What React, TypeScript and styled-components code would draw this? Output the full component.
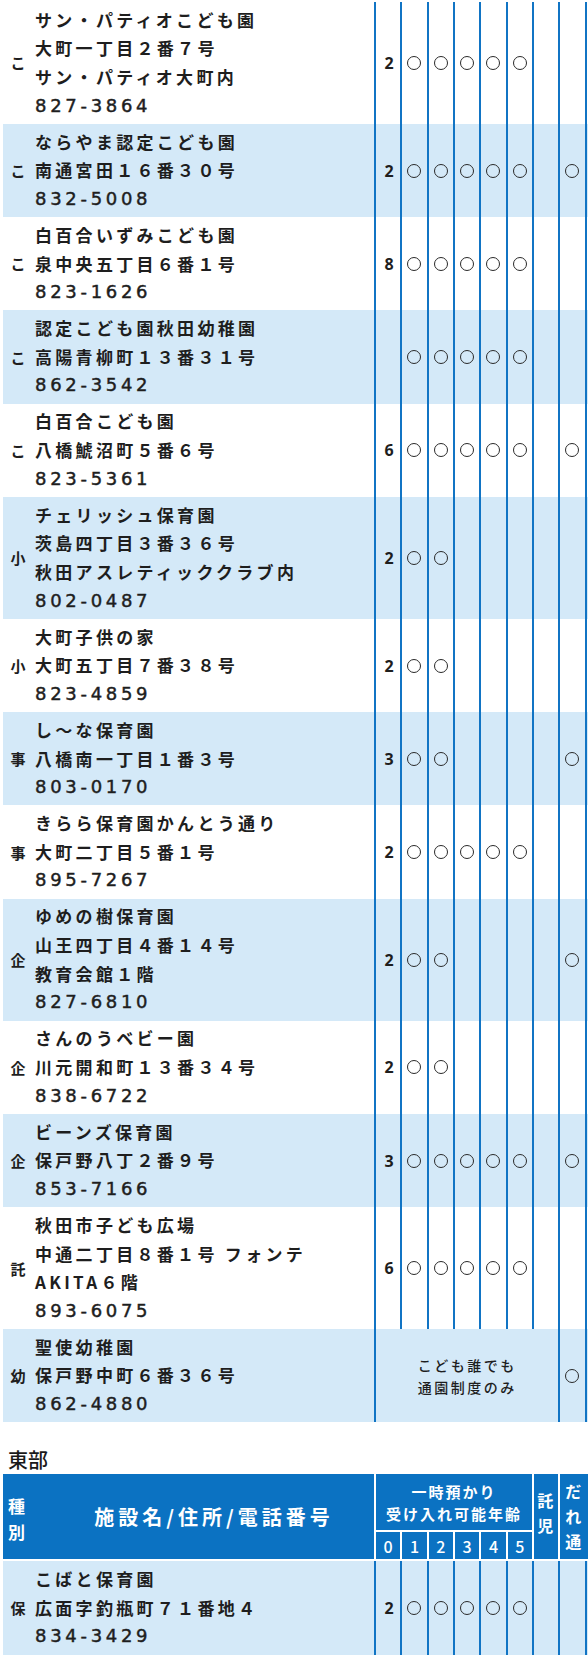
import React from 'react';
import styled, {createGlobalStyle} from "styled-components";

const COLS = '31px 340px repeat(8, 26.33px) 1fr';
const LINE = '#1174c4';
const SHADE = '#d4e9f8';
const HEAD = '#0b72c2';

type Facility = {
    type: string;
    lines: string[];
    phone: string;
    first?: string;
    ages?: number;
    takuji?: boolean;
    dare?: boolean;
    merged?: string[];
};

const west: Facility[] = [
    {type: 'こ', lines: ['サン・パティオこども園', '大町一丁目２番７号', 'サン・パティオ大町内'], phone: '827-3864', first: '2', ages: 5},
    {type: 'こ', lines: ['ならやま認定こども園', '南通宮田１６番３０号'], phone: '832-5008', first: '2', ages: 5, dare: true},
    {type: 'こ', lines: ['白百合いずみこども園', '泉中央五丁目６番１号'], phone: '823-1626', first: '8', ages: 5},
    {type: 'こ', lines: ['認定こども園秋田幼稚園', '高陽青柳町１３番３１号'], phone: '862-3542', first: '', ages: 5},
    {type: 'こ', lines: ['白百合こども園', '八橋鯱沼町５番６号'], phone: '823-5361', first: '6', ages: 5, dare: true},
    {type: '小', lines: ['チェリッシュ保育園', '茨島四丁目３番３６号', '秋田アスレティッククラブ内'], phone: '802-0487', first: '2', ages: 2},
    {type: '小', lines: ['大町子供の家', '大町五丁目７番３８号'], phone: '823-4859', first: '2', ages: 2},
    {type: '事', lines: ['し～な保育園', '八橋南一丁目１番３号'], phone: '803-0170', first: '3', ages: 2, dare: true},
    {type: '事', lines: ['きらら保育園かんとう通り', '大町二丁目５番１号'], phone: '895-7267', first: '2', ages: 5},
    {type: '企', lines: ['ゆめの樹保育園', '山王四丁目４番１４号', '教育会館１階'], phone: '827-6810', first: '2', ages: 2, dare: true},
    {type: '企', lines: ['さんのうベビー園', '川元開和町１３番３４号'], phone: '838-6722', first: '2', ages: 2},
    {type: '企', lines: ['ビーンズ保育園', '保戸野八丁２番９号'], phone: '853-7166', first: '3', ages: 5, dare: true},
    {type: '託', lines: ['秋田市子ども広場', '中通二丁目８番１号 フォンテ', 'AKITA６階'], phone: '893-6075', first: '6', ages: 5},
    {type: '幼', lines: ['聖使幼稚園', '保戸野中町６番３６号'], phone: '862-4880', merged: ['こども誰でも', '通園制度のみ'], dare: true},
];

const east: Facility[] = [
    {type: '保', lines: ['こばと保育園', '広面字釣瓶町７１番地４'], phone: '834-3429', first: '2', ages: 5},
];

const FacilityRow = ({item, shade}: { item: Facility; shade: boolean }) => (
    <Row $shade={shade}>
        <TypeCell>{item.type}</TypeCell>
        <NameCell>
            {item.lines.map((l, i) => <Line key={i}>{l}</Line>)}
            <Line $phone>{item.phone}</Line>
        </NameCell>
        {item.merged ? (
            <MergedCell>{item.merged.map((m, i) => <div key={i}>{m}</div>)}</MergedCell>
        ) : (
            <>
                <MarkCell><Num>{item.first}</Num></MarkCell>
                {[1, 2, 3, 4, 5].map(n => (
                    <MarkCell key={n}>{(item.ages ?? 0) >= n && <Circle/>}</MarkCell>
                ))}
                <MarkCell>{item.takuji && <Circle/>}</MarkCell>
            </>
        )}
        <MarkCell>{item.dare && <Circle/>}</MarkCell>
        <MarkCell/>
    </Row>
);

export default function App() {
    return (
        <>
            <GlobalStyle/>
            <Page>
                <Table>
                    {west.map((item, i) => <FacilityRow key={i} item={item} shade={i % 2 === 1}/>)}
                </Table>
                <AreaTitle>東部</AreaTitle>
                <Table>
                    <Head>
                        <HeadType>種<br/>別</HeadType>
                        <HeadName>施設名/住所/電話番号</HeadName>
                        <HeadGroup>一時預かり<br/>受け入れ可能年齢</HeadGroup>
                        {[0, 1, 2, 3, 4, 5].map(a => <HeadAge key={a} $col={3 + a}>{a}</HeadAge>)}
                        <HeadVertical $col="9 / span 1">託<br/>児</HeadVertical>
                        <HeadVertical $col="10 / span 2" $top={3}>だ<br/>れ<br/>通</HeadVertical>
                    </Head>
                    {east.map((item, i) => <FacilityRow key={i} item={item} shade={true}/>)}
                </Table>
            </Page>
        </>
    );
}

const GlobalStyle = createGlobalStyle`
  html, body {
    margin: 0;
    padding: 0;
    overflow: hidden;
    background: #fff;
  }
  body {
    font-family: "Noto Sans CJK JP", "Noto Sans", sans-serif;
    color: #1e1e1e;
  }
`

const Page = styled.div`
  padding: 2px 0 0 3px;
  width: 585px;
`

const Table = styled.div`
  display: flex;
  flex-direction: column;
`

const Row = styled.div<{ $shade: boolean }>`
  display: grid;
  grid-template-columns: ${COLS};
  background-color: ${p => p.$shade ? SHADE : '#fff'};
`

const TypeCell = styled.div`
  display: flex;
  align-items: center;
  justify-content: center;
  font-size: 15px;
  font-weight: 700;
  padding-right: 1px;
`

const NameCell = styled.div`
  padding: 3.75px 0 3.75px 1px;
  font-size: 17px;
  font-weight: 700;
`

const Line = styled.div<{ $phone?: boolean }>`
  height: 28.6px;
  line-height: 28.6px;
  white-space: nowrap;
  font-family: ${p => p.$phone ? '"DejaVu Sans", sans-serif' : 'inherit'};
  font-size: ${p => p.$phone ? '18px' : 'inherit'};
  font-weight: ${p => p.$phone ? 400 : 700};
  -webkit-text-stroke: ${p => p.$phone ? '0.45px #1e1e1e' : '0'};
  letter-spacing: ${p => p.$phone ? '3.7px' : '3.3px'};
`

const MarkCell = styled.div`
  border-left: 2px solid ${LINE};
  display: flex;
  align-items: center;
  justify-content: center;
`

const MergedCell = styled.div`
  grid-column: span 7;
  border-left: 2px solid ${LINE};
  display: flex;
  flex-direction: column;
  align-items: center;
  justify-content: center;
  font-size: 14px;
  font-weight: 500;
  line-height: 22px;
  letter-spacing: 2.5px;
`

const Num = styled.span`
  font-family: "Noto Sans", sans-serif;
  font-weight: 700;
  font-size: 16px;
  margin-left: 2px;
`

const Circle = styled.span`
  width: 14px;
  height: 14px;
  box-sizing: border-box;
  border: 1.4px solid #2a2a2a;
  border-radius: 50%;
`

const AreaTitle = styled.h3`
  margin: 24px 0 0 5px;
  height: 28px;
  line-height: 28px;
  font-size: 20px;
  font-weight: 500;
  color: #1a1a1a;
`

const Head = styled.div`
  display: grid;
  grid-template-columns: ${COLS};
  grid-template-rows: 58px 27px;
  background-color: ${HEAD};
  color: #fff;
  margin-bottom: 2px;
`

const HeadType = styled.div`
  grid-column: 1;
  grid-row: 1 / span 2;
  display: flex;
  align-items: center;
  padding: 4px 0 0 5px;
  font-size: 17px;
  font-weight: 700;
  line-height: 26px;
`

const HeadName = styled.div`
  grid-column: 2;
  grid-row: 1 / span 2;
  display: flex;
  align-items: center;
  justify-content: center;
  font-size: 20px;
  font-weight: 700;
  letter-spacing: 4px;
  padding-left: 20px;
`

const HeadGroup = styled.div`
  grid-column: 3 / span 6;
  grid-row: 1;
  border-left: 2px solid #fff;
  border-bottom: 2px solid #fff;
  display: flex;
  align-items: center;
  justify-content: center;
  text-align: center;
  font-size: 15px;
  font-weight: 700;
  line-height: 22px;
  letter-spacing: 2px;
  padding-top: 2px;
`

const HeadAge = styled.div<{ $col: number }>`
  grid-column: ${p => p.$col};
  grid-row: 2;
  border-left: 2px solid #fff;
  display: flex;
  align-items: center;
  justify-content: center;
  font-size: 16px;
  font-weight: 500;
`

const HeadVertical = styled.div<{ $col: string; $top?: number }>`
  grid-column: ${p => p.$col};
  grid-row: 1 / span 2;
  border-left: 2px solid #fff;
  display: flex;
  align-items: center;
  justify-content: center;
  text-align: center;
  font-size: 16px;
  font-weight: 700;
  line-height: 25px;
  padding-bottom: ${p => p.$top ? 0 : 8}px;
  padding-right: 2px;
`
